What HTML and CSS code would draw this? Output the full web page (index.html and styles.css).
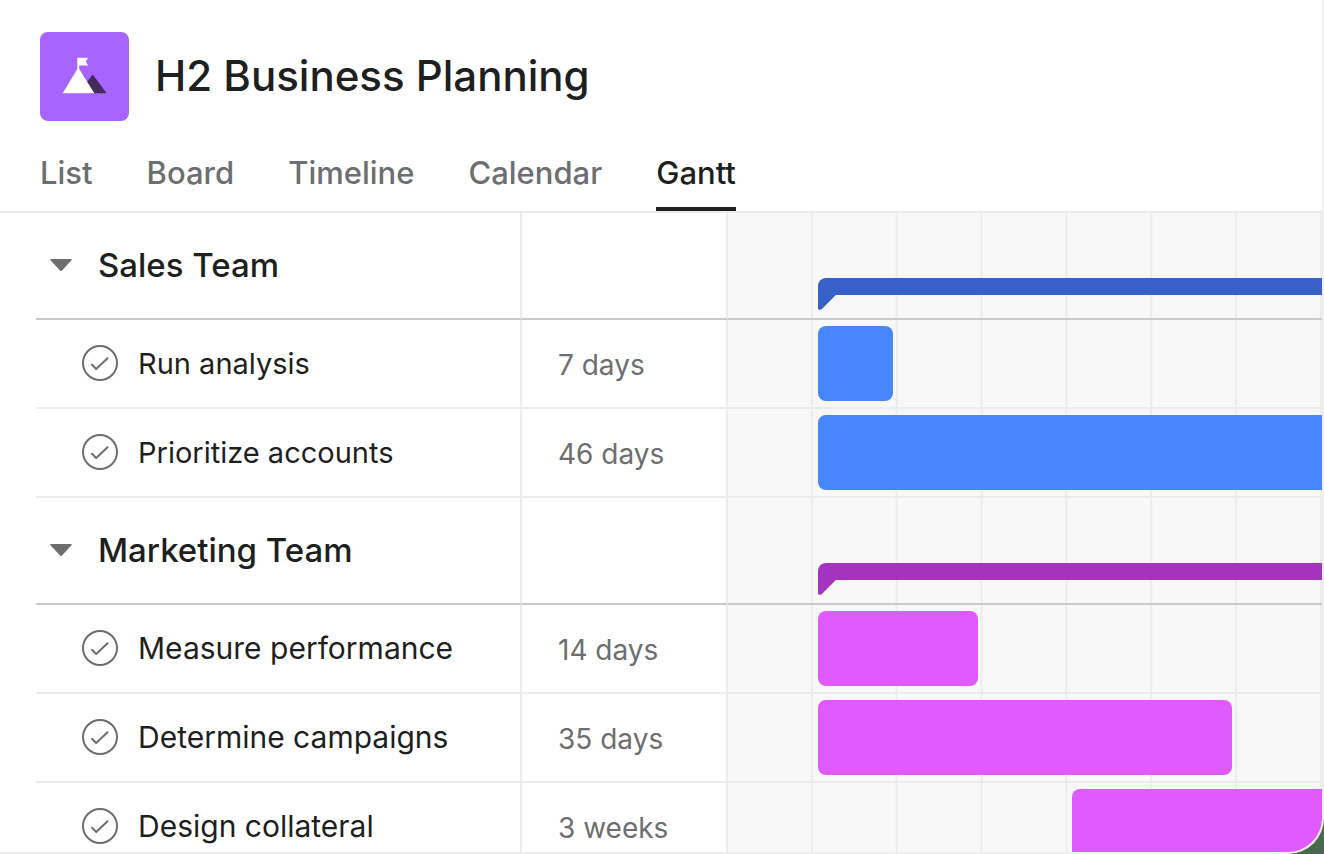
FILE: index.html
```html
<!DOCTYPE html>
<html lang="en">
<head>
    <meta charset="UTF-8">
    <meta name="viewport" content="width=device-width, initial-scale=1.0">
    <title>H2 Business Planning</title>
    <link rel="stylesheet" href="styles.css">
</head>
<body>
    <!-- Shared icons -->
    <svg class="sprite" aria-hidden="true">
        <symbol id="icon_check" viewBox="0 0 36 36">
            <circle cx="18" cy="18" r="17" fill="none" stroke="currentColor" stroke-width="2"/>
            <path d="M10 19.800l4.200 4.200L25.500 13.300" fill="none" stroke="currentColor" stroke-width="2" stroke-linecap="round" stroke-linejoin="round"/>
        </symbol>
        <symbol id="icon_caret" viewBox="0 0 22 12">
            <path d="M1 0h20q1.500 0 .5 1.200L12 11.400q-1 1-2 0L.5 1.200Q-.5 0 1 0z" fill="currentColor"/>
        </symbol>
    </svg>

    <div class="card">
        <header class="header">
            <div class="project">
                <svg class="logo" viewBox="0 0 89 89" aria-hidden="true">
                    <path d="M52.700 42.500L66.700 61.200H50L46.500 50.500z" fill="#432c5c"/>
                    <path d="M37.300 25.800H48.200L45.800 29.500 48.200 33.400H39.200V37L54.300 61.200H22.700L37.300 37z" fill="#fff"/>
                </svg>
                <h1>H2 Business Planning</h1>
            </div>
            <nav class="tabs">
                <a href="#list">List</a>
                <a href="#board">Board</a>
                <a href="#timeline">Timeline</a>
                <a href="#calendar">Calendar</a>
                <a href="#gantt" class="active">Gantt</a>
            </nav>
        </header>

        <div class="gantt">
            <table>
                <colgroup>
                    <col class="col-name">
                    <col class="col-days">
                    <col>
                </colgroup>
                <!-- Sales Team -->
                <tbody class="sales">
                    <tr class="group">
                        <th scope="rowgroup"><div class="cell"><button class="toggle" aria-label="Collapse Sales Team"><svg><use href="#icon_caret"/></svg></button>Sales Team</div></th>
                        <td></td>
                        <td class="weeks"><div class="track"><div class="summary"></div></div></td>
                    </tr>
                    <tr class="task">
                        <td><div class="cell"><button class="check" aria-label="Complete Run analysis"><svg><use href="#icon_check"/></svg></button>Run analysis</div></td>
                        <td class="days">7 days</td>
                        <td class="weeks"><div class="track"><div class="bar one-week"></div></div></td>
                    </tr>
                    <tr class="task">
                        <td><div class="cell"><button class="check" aria-label="Complete Prioritize accounts"><svg><use href="#icon_check"/></svg></button>Prioritize accounts</div></td>
                        <td class="days">46 days</td>
                        <td class="weeks"><div class="track"><div class="bar open"></div></div></td>
                    </tr>
                </tbody>
                <!-- Marketing Team -->
                <tbody class="marketing">
                    <tr class="group">
                        <th scope="rowgroup"><div class="cell"><button class="toggle" aria-label="Collapse Marketing Team"><svg><use href="#icon_caret"/></svg></button>Marketing Team</div></th>
                        <td></td>
                        <td class="weeks"><div class="track"><div class="summary"></div></div></td>
                    </tr>
                    <tr class="task">
                        <td><div class="cell"><button class="check" aria-label="Complete Measure performance"><svg><use href="#icon_check"/></svg></button>Measure performance</div></td>
                        <td class="days">14 days</td>
                        <td class="weeks"><div class="track"><div class="bar two-weeks"></div></div></td>
                    </tr>
                    <tr class="task">
                        <td><div class="cell"><button class="check" aria-label="Complete Determine campaigns"><svg><use href="#icon_check"/></svg></button>Determine campaigns</div></td>
                        <td class="days">35 days</td>
                        <td class="weeks"><div class="track"><div class="bar five-weeks"></div></div></td>
                    </tr>
                    <tr class="task">
                        <td><div class="cell"><button class="check" aria-label="Complete Design collateral"><svg><use href="#icon_check"/></svg></button>Design collateral</div></td>
                        <td class="days">3 weeks</td>
                        <td class="weeks"><div class="track"><div class="bar open later"></div></div></td>
                    </tr>
                </tbody>
            </table>
        </div>
    </div>
</body>
</html>
```
FILE: styles.css
```css
* {
    box-sizing: border-box;
}

body {
    margin: 0;
    background-color: #48694e;
    color: #1e1f21;
    font-family: Inter, "Liberation Sans", sans-serif;
}

.sprite {
    display: none;
}

.card {
    height: 100vh;
    overflow: hidden;
    background-color: #fff;
    border-right: 2px solid #f0eff0;
    border-bottom: 2px solid #f0eff0;
    border-bottom-right-radius: 36px;
}

.header {
    padding: 32px 40px 0;
    border-bottom: 2px solid #ebebeb;
}

.project {
    display: flex;
    align-items: center;
    gap: 26px;
}

.logo {
    width: 89px;
    height: 89px;
    border-radius: 8px;
    background-color: #a864ff;
}

h1 {
    margin: 0;
    padding-bottom: 2px;
    font-size: 42px;
    font-weight: 500;
    line-height: 52px;
}

.tabs {
    display: flex;
    gap: 54px;
    margin-top: 32px;
}

.tabs a {
    height: 58px;
    color: #6d6e6f;
    font-size: 31px;
    font-weight: 500;
    line-height: 40px;
    text-decoration: none;
}

.tabs a.active {
    color: #1e1f21;
    border-bottom: 4px solid #1e1f21;
}

.gantt {
    padding-left: 36px;
}

table {
    width: 100%;
    table-layout: fixed;
    border-spacing: 0;
}

.col-name {
    width: 486px;
}

.col-days {
    width: 206px;
}

th,
td {
    padding: 0;
    border-right: 2px solid #ececec;
    border-bottom: 2px solid #ececec;
    text-align: left;
}

.group th,
.group td {
    height: 107px;
    border-bottom-color: #c9caca;
}

.group th {
    font-size: 33px;
    font-weight: 500;
}

.task td {
    height: 89px;
    font-size: 29px;
}

.marketing .task td {
    font-size: 30px;
}

.task td.days,
.marketing .task td.days {
    padding: 2px 0 0 36px;
    color: #6d6e6f;
    font-size: 28px;
}

.cell {
    display: flex;
    align-items: center;
    padding-bottom: 1px;
}

button {
    padding: 0;
    border: none;
    background: none;
    color: #6d6e6f;
    cursor: pointer;
}

button svg {
    display: block;
    width: 100%;
    height: 100%;
}

.toggle {
    width: 22px;
    height: 12px;
    margin: 0 26px 0 14px;
}

.check {
    width: 36px;
    height: 36px;
    margin: 0 20px 0 46px;
}

/* one grid column per week */
td.weeks {
    border-right: none;
    vertical-align: top;
    background-color: #f8f8f8;
    background-image: linear-gradient(to left, #ececec 2px, transparent 2px);
    background-size: calc(100% / 7) 100%;
}

.track {
    display: grid;
    grid-template-columns: repeat(7, 1fr);
}

.bar {
    height: 75px;
    margin: 6px 5px 0;
    border-radius: 8px;
}

.one-week {
    grid-column: 2 / span 1;
}

.two-weeks {
    grid-column: 2 / span 2;
}

.five-weeks {
    grid-column: 2 / span 5;
}

.open {
    grid-column: 2 / -1;
    margin-right: 0;
    border-radius: 8px 0 0 8px;
}

.later {
    grid-column-start: 5;
}

.summary {
    position: relative;
    grid-column: 2 / -1;
    height: 17px;
    margin: 65px 0 0 5px;
    border-top-left-radius: 8px;
}

.summary::after {
    content: "";
    position: absolute;
    top: 100%;
    left: 0;
    width: 18px;
    height: 15px;
    background-color: inherit;
    clip-path: polygon(0 0, 100% 0, 4px 14px, 2px 15px, 0 14px);
}

.sales .bar {
    background-color: #4786ff;
}

.sales .summary {
    background-color: #3761c8;
}

.marketing .bar {
    background-color: #df5bff;
}

.marketing .summary {
    background-color: #a434c0;
}
```
